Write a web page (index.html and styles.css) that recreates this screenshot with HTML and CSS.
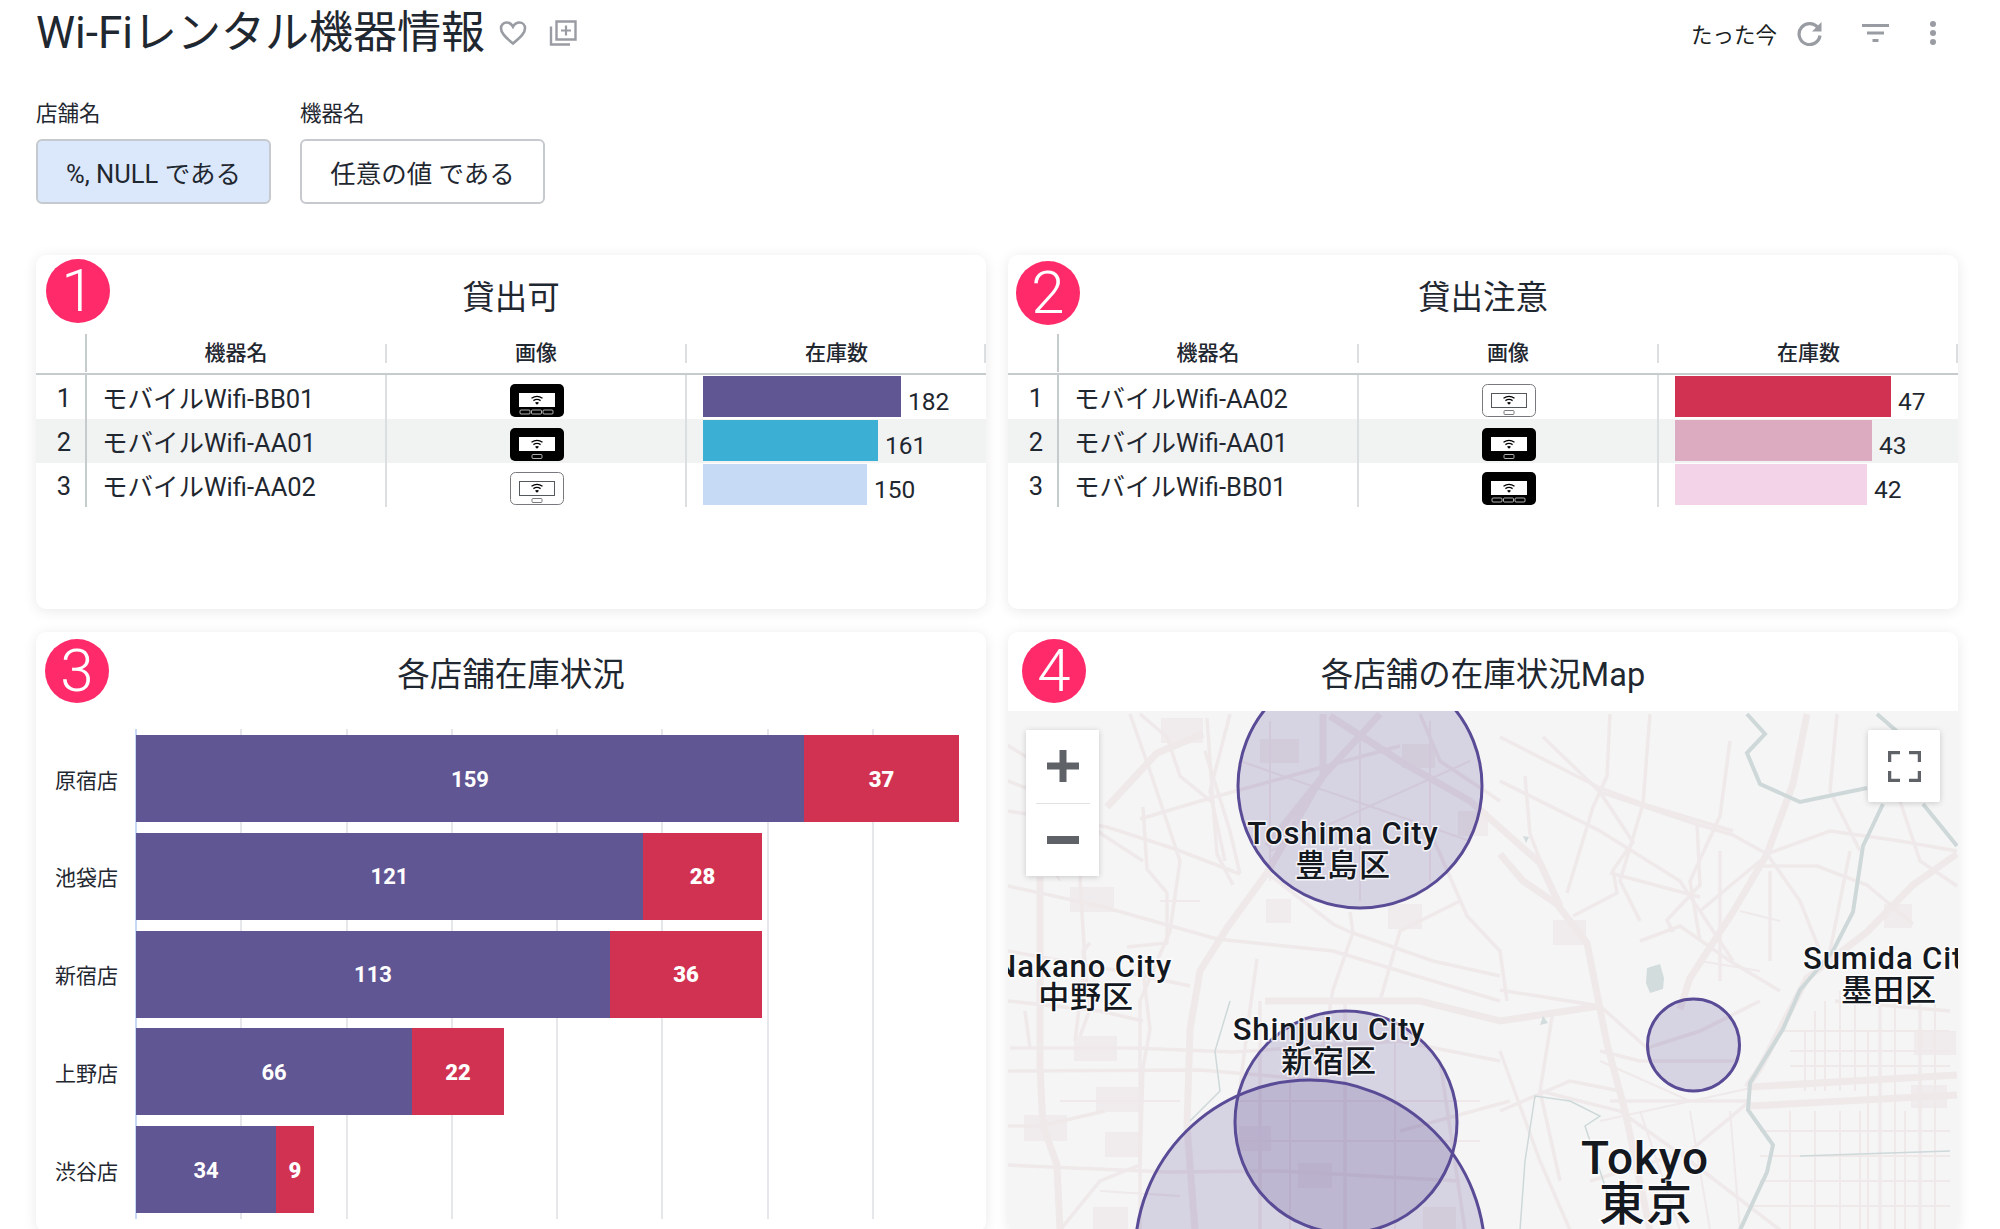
FILE: index.html
```html
<!DOCTYPE html>
<html lang="ja">
<head>
<meta charset="utf-8">
<title>Wi-Fiレンタル機器情報</title>
<link rel="stylesheet" href="styles.css">
</head>
<body>
<svg class="defs" width="0" height="0" aria-hidden="true">
  <symbol id="wifi" viewBox="0 0 54 33">
    <path d="M21.500 14.200q5.500-3.600 11 0M23.400 16.600q3.600-2.300 7.200 0" fill="none" stroke="#000" stroke-width="1.300"/>
    <path d="M27 20.800l-2-2.100q2-1.300 4 0z" fill="#000"/>
  </symbol>
  <symbol id="dev-three" viewBox="0 0 54 33">
    <rect width="54" height="33" rx="5" fill="#000"/>
    <rect x="9" y="9" width="36" height="14" fill="#fff"/>
    <use href="#wifi" width="54" height="33" y="0"/>
    <g fill="none" stroke="#ddd" stroke-width=".8"><rect x="10" y="26" width="10" height="4" rx="1"/><rect x="21.500" y="26" width="10" height="4" rx="1"/><rect x="33" y="26" width="10" height="4" rx="1"/></g>
  </symbol>
  <symbol id="dev-one" viewBox="0 0 54 33">
    <rect width="54" height="33" rx="5" fill="#000"/>
    <rect x="9" y="9" width="36" height="14" fill="#fff"/>
    <use href="#wifi" width="54" height="33"/>
    <rect x="22" y="26.500" width="10" height="4" rx="1" fill="none" stroke="#ddd" stroke-width=".8"/>
  </symbol>
  <symbol id="dev-white" viewBox="0 0 54 33">
    <rect x=".5" y=".5" width="53" height="32" rx="5" fill="#fff" stroke="#77797c"/>
    <rect x="9.500" y="9.500" width="35" height="14" fill="#fff" stroke="#55585b"/>
    <use href="#wifi" width="54" height="33"/>
    <rect x="22" y="26.500" width="10" height="4" rx="1" fill="none" stroke="#55585b" stroke-width=".8"/>
  </symbol>
</svg>

<div class="page">
  <header class="topbar">
    <div class="title-group">
      <h1 class="page-title">Wi-Fiレンタル機器情報</h1>
      <svg class="icon-heart" viewBox="0 0 28 26"><path d="M14 23.500C5 16 2 12.500 2 8.200 2 4.800 4.600 2.500 7.600 2.500c2.500 0 4.900 1.400 6.400 4.200 1.500-2.800 3.900-4.200 6.400-4.200 3 0 5.600 2.300 5.600 5.700 0 4.300-3 7.800-12 15.300z" fill="none" stroke="#9a9ca3" stroke-width="2.600"/></svg>
      <svg class="icon-copy" viewBox="0 0 28 26"><path d="M7.500 1.500h19v18h-19z" fill="none" stroke="#9a9ca3" stroke-width="2.400"/><path d="M2 6.500v18h19" fill="none" stroke="#9a9ca3" stroke-width="2.400"/><path d="M17 5.500v10M12 10.500h10" stroke="#9a9ca3" stroke-width="2.200"/></svg>
    </div>
    <div class="top-actions">
      <span class="updated">たった今</span>
      <svg class="icon-refresh" viewBox="0 0 26 26"><path d="M21.500 8.500A10.500 10.500 0 1 0 23 15.500" fill="none" stroke="#9a9ca3" stroke-width="3.200"/><path d="M24.500 2v9.500H15z" fill="#9a9ca3"/></svg>
      <svg class="icon-filter" viewBox="0 0 27 18"><path d="M0 0h27v3H0zM5 7.500h17v3H5zM10.500 15h6v3h-6z" fill="#9a9ca3"/></svg>
      <svg class="icon-dots" viewBox="0 0 6 24"><circle cx="3" cy="3" r="3" fill="#9a9ca3"/><circle cx="3" cy="12" r="3" fill="#9a9ca3"/><circle cx="3" cy="21" r="3" fill="#9a9ca3"/></svg>
    </div>
  </header>

  <section class="filters">
    <div class="filter">
      <label class="filter-label">店舗名</label>
      <div class="filter-btn filter-btn-active filter-wide">%, NULL である</div>
    </div>
    <div class="filter">
      <label class="filter-label">機器名</label>
      <div class="filter-btn filter-wider">任意の値 である</div>
    </div>
  </section>

  <main class="dashboard">
    <article class="card">
      <span class="badge badge-1">1</span>
      <h2 class="card-title">貸出可</h2>
      <div class="tbl">
        <div class="tr thead"><div class="th th-idx"></div><div class="th th-first">機器名</div><div class="th">画像</div><div class="th th-last">在庫数</div></div>
        <div class="tr"><div class="td td-idx">1</div><div class="td td-name">モバイルWifi-BB01</div><div class="td td-img"><svg class="device"><use href="#dev-three"/></svg></div><div class="td td-bar"><span class="cellbar c-purple" style="width:198px"></span><span class="cellval">182</span></div></div>
        <div class="tr tr-alt"><div class="td td-idx">2</div><div class="td td-name">モバイルWifi-AA01</div><div class="td td-img"><svg class="device"><use href="#dev-one"/></svg></div><div class="td td-bar"><span class="cellbar c-cyan" style="width:175px"></span><span class="cellval">161</span></div></div>
        <div class="tr"><div class="td td-idx">3</div><div class="td td-name">モバイルWifi-AA02</div><div class="td td-img"><svg class="device"><use href="#dev-white"/></svg></div><div class="td td-bar"><span class="cellbar c-sky" style="width:164px"></span><span class="cellval">150</span></div></div>
      </div>
    </article>

    <article class="card">
      <span class="badge badge-2">2</span>
      <h2 class="card-title">貸出注意</h2>
      <div class="tbl">
        <div class="tr thead"><div class="th th-idx"></div><div class="th th-first">機器名</div><div class="th">画像</div><div class="th th-last">在庫数</div></div>
        <div class="tr"><div class="td td-idx">1</div><div class="td td-name">モバイルWifi-AA02</div><div class="td td-img"><svg class="device"><use href="#dev-white"/></svg></div><div class="td td-bar"><span class="cellbar c-red" style="width:216px"></span><span class="cellval">47</span></div></div>
        <div class="tr tr-alt"><div class="td td-idx">2</div><div class="td td-name">モバイルWifi-AA01</div><div class="td td-img"><svg class="device"><use href="#dev-one"/></svg></div><div class="td td-bar"><span class="cellbar c-rose" style="width:197px"></span><span class="cellval">43</span></div></div>
        <div class="tr"><div class="td td-idx">3</div><div class="td td-name">モバイルWifi-BB01</div><div class="td td-img"><svg class="device"><use href="#dev-three"/></svg></div><div class="td td-bar"><span class="cellbar c-pink" style="width:192px"></span><span class="cellval">42</span></div></div>
      </div>
    </article>

    <article class="card">
      <span class="badge badge-3">3</span>
      <h2 class="card-title">各店舗在庫状況</h2>
      <div class="chart">
        <div class="axis">
          <span class="axis-label">原宿店</span>
          <span class="axis-label">池袋店</span>
          <span class="axis-label">新宿店</span>
          <span class="axis-label">上野店</span>
          <span class="axis-label">渋谷店</span>
        </div>
        <div class="plot">
          <div class="stack"><span class="seg seg-a" style="width:668px">159</span><span class="seg seg-b" style="width:155px">37</span></div>
          <div class="stack"><span class="seg seg-a" style="width:507px">121</span><span class="seg seg-b" style="width:119px">28</span></div>
          <div class="stack"><span class="seg seg-a" style="width:474px">113</span><span class="seg seg-b" style="width:152px">36</span></div>
          <div class="stack"><span class="seg seg-a" style="width:276px">66</span><span class="seg seg-b" style="width:92px">22</span></div>
          <div class="stack"><span class="seg seg-a" style="width:140px">34</span><span class="seg seg-b" style="width:38px">9</span></div>
        </div>
      </div>
    </article>

    <article class="card">
      <span class="badge badge-4">4</span>
      <h2 class="card-title">各店舗の在庫状況Map</h2>
      <div class="map">
        <svg class="map-svg" viewBox="1008 710 950 519" width="950" height="519">
          <rect x="1008" y="710" width="950" height="519" fill="#f5f5f5"/>
          <g class="shields">
            <rect x="1161" y="717" width="42" height="25"/><rect x="1260" y="738" width="39" height="24"/><rect x="1402" y="743" width="33" height="24"/><rect x="1458" y="810" width="30" height="25"/>
            <rect x="1070" y="886" width="44" height="25"/><rect x="1266" y="898" width="25" height="24"/><rect x="1388" y="903" width="34" height="25"/><rect x="1074" y="1035" width="43" height="25"/>
            <rect x="1096" y="1086" width="43" height="25"/><rect x="1024" y="1114" width="43" height="26"/><rect x="1105" y="1131" width="34" height="25"/><rect x="1239" y="1125" width="32" height="25"/>
            <rect x="1298" y="1162" width="34" height="25"/><rect x="1093" y="1206" width="35" height="23"/><rect x="1423" y="1206" width="33" height="23"/><rect x="1553" y="919" width="33" height="25"/>
            <rect x="1884" y="903" width="28" height="24"/><rect x="1914" y="1030" width="42" height="24"/><rect x="1911" y="1084" width="36" height="23"/>
          </g>
          <g class="road road-major">
            <path d="M1267 872L1227 927 1200 970 1190 1028 1187 1125 1195 1229"/>
            <path d="M1323 713V775L1313 791 1267 872"/>
            <path d="M1040 876V1067L1043 1125 1057 1164 1060 1229"/>
            <path d="M1107 806L1157 752 1203 733"/>
            <path d="M1807 713L1793 783 1767 853 1733 911 1690 977 1680 1008"/>
            <path d="M1500 853L1523 880 1557 903 1587 942 1600 1008 1607 1043 1625 1110 1650 1229"/>
            <path d="M1957 853L1913 884 1867 931 1807 977 1760 1067 1747 1086"/>
            <path d="M1750 1086L1957 1074M1750 1105L1957 1094"/>
            <path d="M1330 715L1400 760 1470 800 1540 862 1560 905"/>
            <path d="M1380 713L1323 775 1267 845"/>
            <path d="M1265 1000H1420L1500 1020 1600 1005"/>
          </g>
          <g class="road">
            <path d="M1008 810L1107 826 1175 848 1240 873"/><path d="M1140 818L1207 798 1290 775 1400 745"/><path d="M1217 938L1333 950 1500 1000"/>
            <path d="M1350 911L1353 931 1333 989 1317 1078"/><path d="M1433 837L1467 915 1500 950 1507 1000"/>
            <path d="M1010 1047L1133 1047 1233 1051 1400 1040 1500 1060"/><path d="M1007 1070L1200 1069 1330 1080"/><path d="M1007 1164L1167 1171 1280 1170 1460 1180"/>
            <path d="M1543 736L1600 791 1693 822 1733 834 1767 853"/><path d="M1610 713L1607 775 1593 806 1567 892"/><path d="M1650 713L1643 803 1620 880 1640 920"/>
            <path d="M1500 989L1550 997 1600 1005 1647 1047 1700 1030 1760 1000"/><path d="M1130 713L1150 770 1180 860 1170 930 1140 1000 1140 1229"/><path d="M1008 885L1100 905 1217 938"/>
            <path d="M1008 950L1120 970 1190 985"/><path d="M1090 800L1080 880 1085 960 1075 1040"/><path d="M1205 750L1230 830 1240 873"/><path d="M1230 713L1210 790 1225 860"/>
            <path d="M1500 780L1600 830 1680 880 1733 960"/><path d="M1730 740L1720 815 1690 880 1700 940"/><path d="M1767 853L1830 830 1900 840 1957 850"/><path d="M1767 853L1800 900 1820 950"/>
            <path d="M1760 860L1700 910M1720 850V980M1770 870V960M1850 850L1830 950"/><path d="M1640 940L1680 925 1730 960 1780 990"/><path d="M1600 1050L1640 1060 1740 1060"/>
            <path d="M1610 1100L1750 1100M1540 1090L1620 1110 1690 1160 1780 1229"/><path d="M1500 1110L1570 1080 1620 1090"/><path d="M1590 1180L1690 1150 1750 1100"/><path d="M1500 1050L1540 1160 1570 1229"/>
            <path d="M1837 713L1830 790 1860 850"/><path d="M1900 800L1920 860 1957 885"/><path d="M1835 1000L1950 1010"/><path d="M1880 1000V1229M1920 1000V1229"/>
            <path d="M1400 1130L1510 1100M1345 1000V1229M1260 1000V1229M1440 1060L1465 1229"/>
            <path d="M1140 713L1167 736 1180 775 1213 802"/><path d="M1007 744L1040 764 1100 832"/><path d="M1207 717L1213 802 1217 853 1233 884"/>
            <path d="M1143 806L1147 868 1167 892 1167 942 1127 946"/><path d="M1090 942L1083 950 1090 1008 1080 1035"/><path d="M1025 1010L1030 1047"/>
            <path d="M1143 970L1150 1028 1143 1067 1140 1164"/><path d="M1257 958L1250 1008 1240 1086"/><path d="M1267 872L1333 923 1350 931"/>
            <path d="M1350 931L1433 960 1500 975"/><path d="M1500 736L1600 787 1643 803 1733 830"/><path d="M1525 775L1530 833 1557 903"/>
            <path d="M1697 822L1700 884 1667 919 1673 931"/><path d="M1600 791L1633 841 1613 869 1617 892 1573 915"/><path d="M1610 872L1700 896"/>
            <path d="M1753 865H1817L1867 884 1913 923"/><path d="M1008 1000L1100 1010 1143 1020"/><path d="M1060 1229L1100 1180 1140 1164"/><path d="M1008 1125L1040 1125 1105 1110"/>
            <path d="M1008 780L1060 800 1100 832 1143 860"/><path d="M1420 713L1440 760 1500 800"/><path d="M1460 900L1400 930 1380 1000"/><path d="M1553 1010L1540 1090 1560 1180"/>
          </g>
          <g class="road road-fine">
            <path d="M1805 1030V1090M1815 1010V1090M1825 1000V1090M1840 990V1090M1855 980V1090M1868 1030V1229M1895 1000V1229M1790 1110V1229M1815 1110V1229M1840 1110V1229M1860 1110V1229M1905 1110V1229M1935 1000V1229"/>
            <path d="M1780 1030H1950M1790 1050H1950M1790 1065H1950M1760 1130H1950M1760 1155H1950M1760 1180H1950M1750 1205H1950"/>
            <path d="M1600 1120L1760 1085M1600 1060L1690 1100M1640 1110L1680 1229M1690 1110L1710 1229M1730 1110L1740 1229"/>
            <path d="M1240 1100H1480M1240 1140H1480M1290 1050V1229M1395 1040V1229"/>
            <path d="M1360 730V900M1270 720V880M1430 720V880M1240 760L1470 840M1270 850L1470 760"/>
            <path d="M1030 830L1060 880M1160 900L1200 900M1060 1100H1180M1100 1190L1180 1195M1740 910L1780 920M1700 960L1760 970"/>
          </g>
          <g class="water">
            <path d="M1747 713L1765 733 1747 752 1760 783 1800 801 1867 787"/>
            <path d="M1883 803L1863 845 1853 911 1833 950 1800 989 1783 1028 1750 1082 1748 1109 1773 1144 1767 1171 1740 1229"/>
            <path d="M1877 713L1900 733M1923 803L1957 845"/>
            <path class="water-thin" d="M1520 1229L1525 1160 1535 1095 1570 1100 1600 1115 1585 1125 1610 1200M1800 1155L1950 1150M1230 1000L1215 1050 1220 1090 1190 1120"/>
          </g>
          <path class="water-fill" d="M1647 967L1660 963 1664 977 1663 988 1650 992 1646 982z"/>
          <path class="water-fill" d="M1523 835L1529 836 1526 842zM1543 1015L1548 1022 1540 1024z"/>
          <g class="zones">
            <circle cx="1360" cy="785" r="122"/>
            <circle cx="1346" cy="1121" r="111"/>
            <circle cx="1310" cy="1254" r="175"/>
            <circle cx="1693.500" cy="1044" r="46"/>
          </g>
          <g class="places">
            <text x="1343" y="843">Toshima City</text>
            <text x="1343" y="875">豊島区</text>
            <text class="place-end" x="1172" y="976">Nakano City</text>
            <text x="1086" y="1007">中野区</text>
            <text x="1329" y="1039">Shinjuku City</text>
            <text x="1329" y="1071">新宿区</text>
            <text class="place-start" x="1803" y="968">Sumida City</text>
            <text x="1889" y="1000">墨田区</text>
            <text class="place-big" x="1645" y="1173">Tokyo</text>
            <text class="place-big" x="1646" y="1219">東京</text>
          </g>
        </svg>
        <div class="zoom-ctl">
          <button class="ctl-btn" type="button" aria-label="拡大"><svg class="ctl-icon" viewBox="0 0 32 32"><path d="M0 12.500h12.500V0h7v12.500H32v7H19.500V32h-7V19.500H0z" fill="#5f6368"/></svg></button>
          <span class="ctl-divider"></span>
          <button class="ctl-btn" type="button" aria-label="縮小"><svg class="ctl-icon ctl-minus" viewBox="0 0 32 8"><path d="M0 0h32v8H0z" fill="#5f6368"/></svg></button>
        </div>
        <button class="fs-btn" type="button" aria-label="全画面"><svg class="fs-icon" viewBox="0 0 33 31"><path d="M1.500 11V1.500H12M21 1.500h10.500V11M1.500 20v9.500H12M21 29.500h10.500V20" fill="none" stroke="#5f6368" stroke-width="3.500"/></svg></button>
      </div>
    </article>
  </main>
</div>
</body>
</html>
```
FILE: styles.css
```css
* { box-sizing: border-box; }
html, body { margin: 0; padding: 0; background: #fff; }
body {
  width: 2000px;
  height: 1229px;
  overflow: hidden;
  font-family: Roboto, "Noto Sans CJK JP", sans-serif;
  color: #1f2730;
}
.defs { position: absolute; }
.page { padding: 0 42px 0 36px; }

.topbar {
  display: flex;
  justify-content: space-between;
  align-items: center;
  height: 66px;
}
.title-group { display: flex; align-items: center; }
.page-title { margin: 0; font-size: 44px; font-weight: 400; line-height: 66px; }
.icon-heart { width: 28px; height: 26px; margin-left: 14px; }
.icon-copy { width: 28px; height: 26px; margin-left: 22px; }
.top-actions { display: flex; align-items: center; padding: 0 23px 0 0; }
.updated { font-size: 21.500px; color: #1b1f24; margin-right: 20px; }
.icon-refresh { width: 26px; height: 26px; margin-right: 39px; }
.icon-filter { width: 27px; height: 18px; margin-right: 41px; }
.icon-dots { width: 6px; height: 24px; margin-right: -1px; }

.filters { display: flex; gap: 29px; margin-top: 33px; }
.filter { display: flex; flex-direction: column; }
.filter-label { font-size: 21.500px; line-height: 30px; margin-bottom: 10px; }
.filter-btn {
  height: 65px;
  display: flex;
  align-items: center;
  justify-content: center;
  border: 2px solid #c6c9cd;
  border-radius: 6px;
  font-size: 25.500px;
  background: #fff;
}
.filter-wide { width: 235px; }
.filter-wider { width: 245px; }
.filter-btn-active { background: #dbe8fb; }

.dashboard {
  display: grid;
  grid-template-columns: 950px 950px;
  grid-template-rows: 354px 600px;
  column-gap: 22px;
  row-gap: 23px;
  margin-top: 51px;
}
.card {
  position: relative;
  background: #fff;
  border-radius: 10px;
  box-shadow: 0 2px 14px rgba(0, 0, 0, .09);
  overflow: hidden;
}
.card-title {
  margin: 0;
  height: 79px;
  padding-top: 19px;
  font-size: 32.500px;
  line-height: 48px;
  font-weight: 400;
  text-align: center;
}
.badge {
  position: absolute;
  width: 64px;
  height: 64px;
  border-radius: 50%;
  background: #ff2a6a;
  color: #fff;
  font-size: 60px;
  font-weight: 300;
  line-height: 64px;
  text-align: center;
}
.badge-1 { left: 10px; top: 4px; }
.badge-2 { left: 8px; top: 6px; }
.badge-3 { left: 9px; top: 7px; }
.badge-4 { left: 14px; top: 7px; }

.tr { display: grid; grid-template-columns: 49px 300px 300px 301px; height: 44px; }
.thead { height: 41px; border-bottom: 2px solid #c6cbce; }
.tr-alt { background: #f1f2f2; }
.th {
  position: relative;
  display: flex;
  align-items: center;
  justify-content: center;
  font-size: 21px;
  font-weight: 500;
  padding: 0 0 5px 2px;
  height: 38px;
}
.th::before {
  content: "";
  position: absolute;
  left: 0;
  top: 10px;
  height: 19px;
  width: 2px;
  background: #dcdfe1;
}
.th-idx::before { display: none; }
.th-first::before { top: 0; height: 38px; background: #c6cbce; }
.th-last::after {
  content: "";
  position: absolute;
  right: 0;
  top: 10px;
  height: 19px;
  width: 2px;
  background: #dcdfe1;
}
.td { display: flex; align-items: center; height: 44px; font-size: 25.500px; line-height: 42px; }
.td-idx { justify-content: center; padding: 2px 0 0 7px; }
.td-name { border-left: 2px solid #c6cbce; padding: 3px 0 0 15px; }
.td-img { border-left: 2px solid #dcdfe1; justify-content: center; padding-left: 2px; }
.td-bar { border-left: 2px solid #dcdfe1; padding-left: 16px; align-items: flex-start; padding-top: 1px; }
.device { width: 54px; height: 33px; margin-top: 6px; }
.cellbar { display: block; height: 41px; }
.cellval { font-size: 24.500px; line-height: 28px; margin: 12px 0 0 7px; }
.c-purple { background: #615694; }
.c-cyan { background: #3bafd4; }
.c-sky { background: #c7daf5; }
.c-red { background: #d13252; }
.c-rose { background: #ddabc0; }
.c-pink { background: #f2d3e8; }

.chart { display: grid; grid-template-columns: 99px 1fr; margin-top: 18px; }
.axis {
  display: grid;
  grid-template-rows: repeat(5, 87px);
  row-gap: 10.800px;
  padding: 6px 0 0 19px;
}
.axis-label { display: flex; align-items: center; font-size: 21px; }
.plot {
  display: grid;
  grid-template-rows: repeat(5, 87px);
  row-gap: 10.800px;
  align-content: start;
  width: 740px;
  height: 490px;
  padding: 6px 0 0 1px;
  background-image:
    linear-gradient(90deg, #c7daf5 0 2px, transparent 2px),
    repeating-linear-gradient(90deg, #e6e7ea 0 2px, transparent 2px 105.300px);
}
.stack { display: flex; height: 87px; }
.seg {
  display: flex;
  align-items: center;
  justify-content: center;
  color: #fff;
  font-size: 22px;
  font-weight: 700;
  padding-top: 1px;
}
.seg-a { background: #615694; }
.seg-b { background: #d13252; font-weight: 900; }

.map { position: relative; height: 519px; overflow: hidden; }
.map-svg { display: block; }
.shields rect { fill: #f0ebec; }
.road path { fill: none; stroke: #efe9ea; stroke-width: 3.500px; }
.road-major path { stroke-width: 7px; }
.road-fine path { stroke-width: 2px; }
.water path { fill: none; stroke: #ced8d9; stroke-width: 4px; }
.water .water-thin { stroke-width: 1.500px; }
.water-fill { fill: #d2dcdc; }
.zones circle { fill: rgba(90, 75, 150, .2); stroke: #5a4b96; stroke-width: 3px; }
.places text {
  font-family: Roboto, "Noto Sans CJK JP", sans-serif;
  font-size: 31px;
  font-weight: 500;
  letter-spacing: .9px;
  fill: #14181f;
  stroke: #fff;
  stroke-width: 3px;
  stroke-opacity: .75;
  paint-order: stroke;
  text-anchor: middle;
}
.places .place-end { text-anchor: end; }
.places .place-start { text-anchor: start; }
.places .place-big { font-size: 46px; font-weight: 500; }

.zoom-ctl {
  position: absolute;
  left: 18px;
  top: 19px;
  width: 73px;
  height: 146px;
  display: flex;
  flex-direction: column;
  align-items: center;
  background: #fff;
  box-shadow: 0 1px 6px rgba(0, 0, 0, .18);
}
.ctl-btn { flex: 1; width: 100%; display: flex; align-items: center; justify-content: center; border: 0; padding: 0; background: none; }
.ctl-icon { width: 32px; height: 32px; }
.ctl-minus { height: 8px; }
.ctl-divider { width: 54px; height: 1px; background: #e2e2e2; }
.fs-btn {
  position: absolute;
  left: 860px;
  top: 19px;
  width: 72px;
  height: 72px;
  display: flex;
  align-items: center;
  justify-content: center;
  border: 0;
  padding: 0;
  border-radius: 2px;
  background: #fff;
  box-shadow: 0 1px 6px rgba(0, 0, 0, .18);
}
.fs-icon { width: 33px; height: 31px; }
```
